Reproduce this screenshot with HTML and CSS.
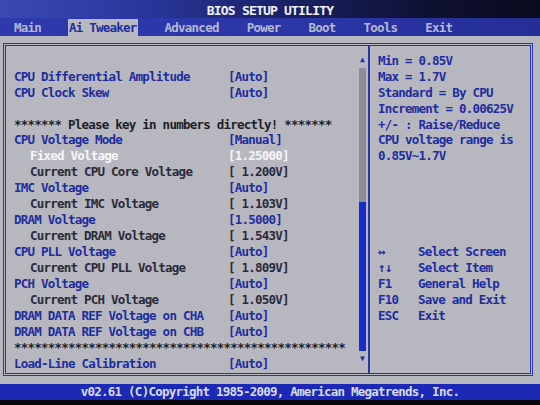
FILE: index.html
```html
<!DOCTYPE html>
<html lang="en">
<head>
<meta charset="utf-8">
<title>BIOS SETUP UTILITY</title>
<link rel="stylesheet" href="styles.css">
</head>
<body>
<div class="screen">
  <header class="title">BIOS SETUP UTILITY</header>

  <nav class="menu">
    <span class="tab">Main</span>
    <span class="tab active">Ai Tweaker</span>
    <span class="tab">Advanced</span>
    <span class="tab">Power</span>
    <span class="tab">Boot</span>
    <span class="tab">Tools</span>
    <span class="tab">Exit</span>
  </nav>

  <main class="body">
    <div class="frame">
      <section class="settings">
        <div class="list">
          <div class="row"></div>
          <div class="row item"><span class="label">CPU Differential Amplitude</span><span class="value">[Auto]</span></div>
          <div class="row item"><span class="label">CPU Clock Skew</span><span class="value">[Auto]</span></div>
          <div class="row"></div>
          <div class="row note">******* Please key in numbers directly! *******</div>
          <div class="row item"><span class="label">CPU Voltage Mode</span><span class="value">[Manual]</span></div>
          <div class="row sub current"><span class="label">Fixed Voltage</span><span class="value">[1.25000]</span></div>
          <div class="row sub"><span class="label">Current CPU Core Voltage</span><span class="value">[ 1.200V]</span></div>
          <div class="row item"><span class="label">IMC Voltage</span><span class="value">[Auto]</span></div>
          <div class="row sub"><span class="label">Current IMC Voltage</span><span class="value">[ 1.103V]</span></div>
          <div class="row item"><span class="label">DRAM Voltage</span><span class="value">[1.5000]</span></div>
          <div class="row sub"><span class="label">Current DRAM Voltage</span><span class="value">[ 1.543V]</span></div>
          <div class="row item"><span class="label">CPU PLL Voltage</span><span class="value">[Auto]</span></div>
          <div class="row sub"><span class="label">Current CPU PLL Voltage</span><span class="value">[ 1.809V]</span></div>
          <div class="row item"><span class="label">PCH Voltage</span><span class="value">[Auto]</span></div>
          <div class="row sub"><span class="label">Current PCH Voltage</span><span class="value">[ 1.050V]</span></div>
          <div class="row item"><span class="label">DRAM DATA REF Voltage on CHA</span><span class="value">[Auto]</span></div>
          <div class="row item"><span class="label">DRAM DATA REF Voltage on CHB</span><span class="value">[Auto]</span></div>
          <div class="row note">*************************************************</div>
          <div class="row item"><span class="label">Load-Line Calibration</span><span class="value">[Auto]</span></div>
        </div>

        <div class="scrollbar">
          <span class="arrow">&#9650;</span>
          <div class="track"><div class="thumb"></div></div>
          <span class="arrow">&#9660;</span>
        </div>
      </section>

      <aside class="help">
        <div class="info">
          <div class="line">Min = 0.85V</div>
          <div class="line">Max = 1.7V</div>
          <div class="line">Standard = By CPU</div>
          <div class="line">Increment = 0.00625V</div>
          <div class="line">+/- : Raise/Reduce</div>
          <div class="line">CPU voltage range is</div>
          <div class="line">0.85V~1.7V</div>
        </div>
        <div class="keys">
          <div class="line"><span class="key arrows">&#8596;</span><span>Select Screen</span></div>
          <div class="line"><span class="key arrows">&#8593;&#8595;</span><span>Select Item</span></div>
          <div class="line"><span class="key">F1</span><span>General Help</span></div>
          <div class="line"><span class="key">F10</span><span>Save and Exit</span></div>
          <div class="line"><span class="key">ESC</span><span>Exit</span></div>
        </div>
      </aside>
    </div>
  </main>

  <footer class="copy">v02.61 (C)Copyright 1985-2009, American Megatrends, Inc.</footer>
</div>
</body>
</html>
```

FILE: styles.css
```css
:root {
  --row: 15.95px;
  --panel: #b7b8bf;
  --line: #2b35a8;
  --blue-text: #1f2c9e;
  --dark-text: #2a2a3a;
}

* {
  box-sizing: border-box;
  margin: 0;
  padding: 0;
}

html,
body {
  width: 540px;
  height: 405px;
  overflow: hidden;
  background: #07070b;
}

body {
  font-family: "DejaVu Sans Mono", "Liberation Mono", monospace;
  font-weight: bold;
  font-size: 12.5px;
  letter-spacing: -0.77px;
}

.screen {
  display: flex;
  flex-direction: column;
  height: 400px;
}

/* top caption */
.title {
  height: 18px;
  padding-top: 3px;
  line-height: 16px;
  font-size: 13px;
  letter-spacing: -0.8px;
  text-align: center;
  color: #f2f2f6;
  background: linear-gradient(90deg, #3a4ab2 0%, #2a389e 25%, #182062 55%, #0e1030 80%, #0a0b1e 100%);
}

/* tab strip */
.menu {
  height: 18px;
  display: flex;
  align-items: flex-end;
  gap: 26px;
  padding-left: 13px;
  color: #b4b8d4;
  background: linear-gradient(90deg, #2e3aac 0%, #2a35a6 60%, #252e96 100%);
}

.tab {
  height: 17px;
  line-height: 17px;
  padding: 0 1px;
}

.tab.active {
  background: #b8b9c0;
  color: var(--blue-text);
}

/* main panel */
.body {
  flex: 1;
  display: flex;
  padding: 7px 7px 8px 3px;
  background: var(--panel);
}

.frame {
  flex: 1;
  display: flex;
  border: 3px double var(--line);
}

.settings {
  width: 362px;
  display: flex;
  padding-top: 6.8px;
}

.list {
  flex: 1;
  padding-left: 8px;
}

.row {
  display: flex;
  height: var(--row);
  line-height: var(--row);
  white-space: pre;
  color: var(--dark-text);
}

.label {
  width: 214px;
}

.row.item {
  color: var(--blue-text);
}

.row.sub .label {
  padding-left: 16px;
}

.row.current {
  color: #f6f6f8;
}

.row.note {
  color: #1e1e28;
}

/* scroll indicator */
.scrollbar {
  width: 7px;
  margin-right: 2px;
  padding-bottom: 6px;
  margin-top: -1.2px;
  display: flex;
  flex-direction: column;
  align-items: center;
}

.arrow {
  height: var(--row);
  line-height: var(--row);
  font-size: 8px;
  letter-spacing: 0;
  color: #1f2ca8;
}

.track {
  flex: 1;
  width: 7px;
  display: flex;
  flex-direction: column;
  justify-content: flex-end;
  background: #8d8e95;
}

.thumb {
  height: 52.6%;
  background: #1a2ac6;
}

/* help column */
.help {
  flex: 1;
  border-left: 2px solid var(--line);
  padding: 6.8px 0 0 8px;
  color: var(--blue-text);
}

.line {
  display: flex;
  height: var(--row);
  line-height: var(--row);
  white-space: pre;
}

.keys {
  margin-top: calc(var(--row) * 5);
}

.key {
  width: 40px;
}

.key.arrows {
  font-size: 12.5px;
  letter-spacing: -0.5px;
}

/* status line */
.copy {
  height: 16px;
  line-height: 16px;
  text-align: center;
  color: #d8dbea;
  background: #1c29b6;
}
```
